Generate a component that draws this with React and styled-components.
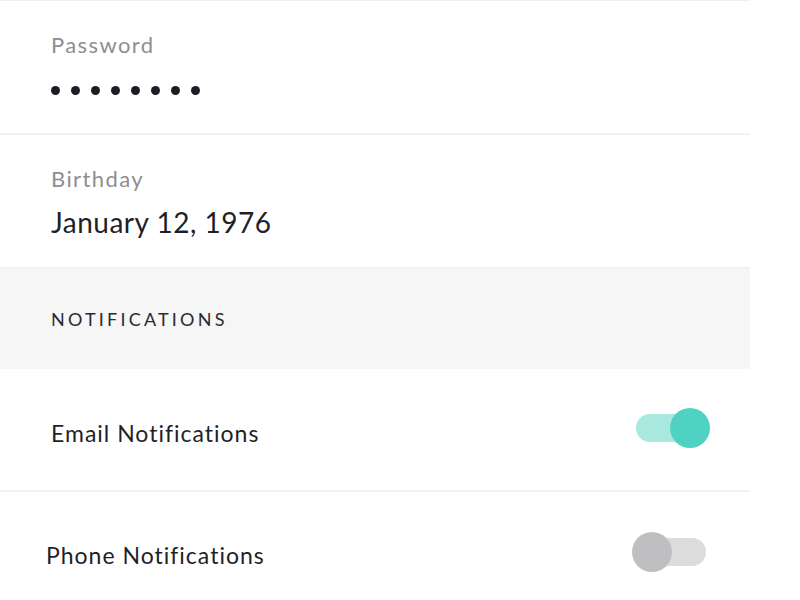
import React from "react";
import styled, { createGlobalStyle } from "styled-components";

const GlobalStyle = createGlobalStyle`
  html, body {
    margin: 0;
    padding: 0;
    background: #fff;
  }
  body {
    font-family: Lato, "Noto Sans", sans-serif;
    color: #1f1f28;
  }
`;

const Panel = styled.div`
  width: 750px;
  border-top: 1px solid #f0f0f0;
`;

const FieldRow = styled.div`
  display: flex;
  flex-direction: column;
  height: ${(p) => p.height}px;
  box-sizing: border-box;
  padding: 31px 0 0 51px;
  border-bottom: 2px solid #f2f2f2;
`;

const Label = styled.div`
  font-size: 22px;
  line-height: 26px;
  color: #8e8e93;
  letter-spacing: 1.4px;
`;

const Value = styled.div`
  margin-top: 13px;
  font-size: 28px;
  line-height: 34px;
  color: #1f1f28;
  letter-spacing: 0.5px;
`;

const Dots = styled.div`
  display: flex;
  gap: 11px;
  margin-top: 28px;
`;

const Dot = styled.span`
  width: 9px;
  height: 9px;
  border-radius: 50%;
  background: #1c1c26;
`;

const SectionHeader = styled.div`
  display: flex;
  align-items: center;
  height: 100px;
  padding-left: 51px;
  background: #f6f6f6;
  font-size: 18px;
  letter-spacing: 3.2px;
  color: #2a2a33;
`;

const ToggleRow = styled.div`
  display: flex;
  align-items: center;
  justify-content: space-between;
  height: ${(p) => p.height}px;
  box-sizing: border-box;
  padding: 0 44px 0 ${(p) => p.indent}px;
  border-bottom: ${(p) => (p.last ? "none" : "2px solid #f2f2f2")};
`;

const ToggleLabel = styled.span`
  font-size: 23px;
  letter-spacing: 1px;
  color: #1f1f28;
  margin-top: ${(p) => p.shift}px;
`;

const Track = styled.div`
  position: relative;
  width: 70px;
  height: 28px;
  margin-top: ${(p) => p.shift}px;
  border-radius: 14px;
  background: ${(p) => (p.on ? "#a9e8df" : "#dcdcdc")};
`;

const Knob = styled.span`
  position: absolute;
  top: -6px;
  left: ${(p) => (p.on ? "34px" : "-4px")};
  width: 40px;
  height: 40px;
  border-radius: 50%;
  background: ${(p) => (p.on ? "#4fd2c2" : "#bfbfc1")};
`;

const Toggle = ({ on, shift = 0 }) => (
  <Track on={on} shift={shift}>
    <Knob on={on} />
  </Track>
);

const App = () => {
  return (
    <>
      <GlobalStyle />
      <Panel>
        <FieldRow height={134}>
          <Label>Password</Label>
          <Dots>
            {Array.from({ length: 8 }).map((_, i) => (
              <Dot key={i} />
            ))}
          </Dots>
        </FieldRow>
        <FieldRow height={134}>
          <Label>Birthday</Label>
          <Value>January 12, 1976</Value>
        </FieldRow>
        <SectionHeader>NOTIFICATIONS</SectionHeader>
        <ToggleRow height={123} indent={51}>
          <ToggleLabel shift={6}>Email Notifications</ToggleLabel>
          <Toggle on shift={-3} />
        </ToggleRow>
        <ToggleRow height={120} indent={46} last>
          <ToggleLabel shift={5}>Phone Notifications</ToggleLabel>
          <Toggle shift={-1} />
        </ToggleRow>
      </Panel>
    </>
  );
};

export default App;
